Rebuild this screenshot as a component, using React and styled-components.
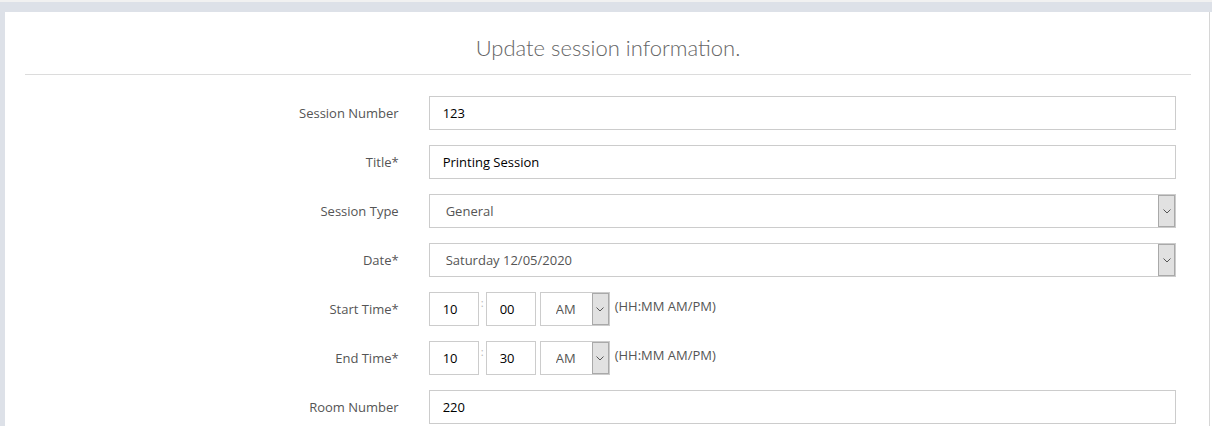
import React from "react";
import styled, { createGlobalStyle } from "styled-components";

const GlobalStyle = createGlobalStyle`
  body {
    margin: 0;
    background: #dde1e8;
    font-family: "Open Sans", "Liberation Sans", sans-serif;
  }
`;

const Page = styled.div`
  border-top: 2px solid #f1f1f1;
  padding: 10px 0 0 5px;
  height: 414px;
  overflow: hidden;
`;

const Card = styled.div`
  background: #fff;
  height: 100%;
  padding: 0 21px 0 20px;
  box-shadow: inset -2px 0 0 #fff, inset -3px 0 0 #d6d6d6;
`;

const Heading = styled.h2`
  margin: 0;
  height: 62px;
  line-height: 72px;
  text-align: center;
  font-family: Lato, "Open Sans", sans-serif;
  font-weight: 300;
  font-size: 22px;
  color: #666;
  border-bottom: 1px solid #dcdcdc;
`;

const Form = styled.form`
  display: grid;
  grid-template-columns: 1fr 2fr;
  column-gap: 30px;
  row-gap: 15px;
  padding: 21px 15px 0 0;
`;

const Label = styled.label`
  display: flex;
  align-items: center;
  justify-content: flex-end;
  height: 34px;
  font-size: 13px;
  color: #555;
`;

const TextInput = styled.input`
  box-sizing: border-box;
  width: ${(p) => p.$width || "100%"};
  height: 34px;
  border: 1px solid #ccc;
  padding: 0 13px;
  font-family: inherit;
  font-size: 13px;
  color: #000;
  outline: none;
`;

const SelectBox = styled.div`
  box-sizing: border-box;
  display: flex;
  align-items: stretch;
  width: ${(p) => p.$width || "100%"};
  height: 34px;
  margin-left: ${(p) => p.$offset || 0}px;
  border: 1px solid #ccc;
  flex-shrink: 0;
`;

const SelectValue = styled.select`
  flex: 1;
  min-width: 0;
  border: none;
  appearance: none;
  background: transparent;
  padding: 0 ${(p) => p.$pad || 16}px;
  font-family: inherit;
  font-size: 13px;
  color: #555;
  outline: none;
`;

const ArrowButton = styled.span`
  box-sizing: border-box;
  width: 17px;
  background: #e1e1e1;
  border: 1px solid #a9a9a9;
  display: flex;
  align-items: center;
  justify-content: center;
`;

const TimeGroup = styled.div`
  display: flex;
  align-items: flex-start;
`;

const Colon = styled.span`
  width: 7px;
  text-align: center;
  font-size: 11px;
  line-height: 22px;
  color: #b5b5b5;
`;

const Hint = styled.span`
  margin-left: 5px;
  font-size: 13px;
  line-height: 28px;
  color: #555;
`;

function Chevron() {
  return (
    <svg width="8" height="5" viewBox="0 0 8 5">
      <path d="M0.5 0.5 L4 4 L7.5 0.5" fill="none" stroke="#555" strokeWidth="1" />
    </svg>
  );
}

function Select({ value, width, pad, offset }) {
  return (
    <SelectBox $width={width} $offset={offset}>
      <SelectValue $pad={pad} defaultValue={value}>
        <option>{value}</option>
      </SelectValue>
      <ArrowButton>
        <Chevron />
      </ArrowButton>
    </SelectBox>
  );
}

function TimeInput({ hour, minute, period }) {
  return (
    <TimeGroup>
      <TextInput $width="50px" defaultValue={hour} />
      <Colon>:</Colon>
      <TextInput $width="50px" defaultValue={minute} />
      <Select value={period} width="70px" pad={15} offset={4} />
      <Hint>(HH:MM AM/PM)</Hint>
    </TimeGroup>
  );
}

export default function App() {
  return (
    <>
      <GlobalStyle />
      <Page>
        <Card>
          <Heading>Update session information.</Heading>
          <Form>
            <Label>Session Number</Label>
            <TextInput defaultValue="123" />

            <Label>Title*</Label>
            <TextInput defaultValue="Printing Session" />

            <Label>Session Type</Label>
            <Select value="General" />

            <Label>Date*</Label>
            <Select value="Saturday 12/05/2020" />

            <Label>Start Time*</Label>
            <TimeInput hour="10" minute="00" period="AM" />

            <Label>End Time*</Label>
            <TimeInput hour="10" minute="30" period="AM" />

            <Label>Room Number</Label>
            <TextInput defaultValue="220" />
          </Form>
        </Card>
      </Page>
    </>
  );
}
